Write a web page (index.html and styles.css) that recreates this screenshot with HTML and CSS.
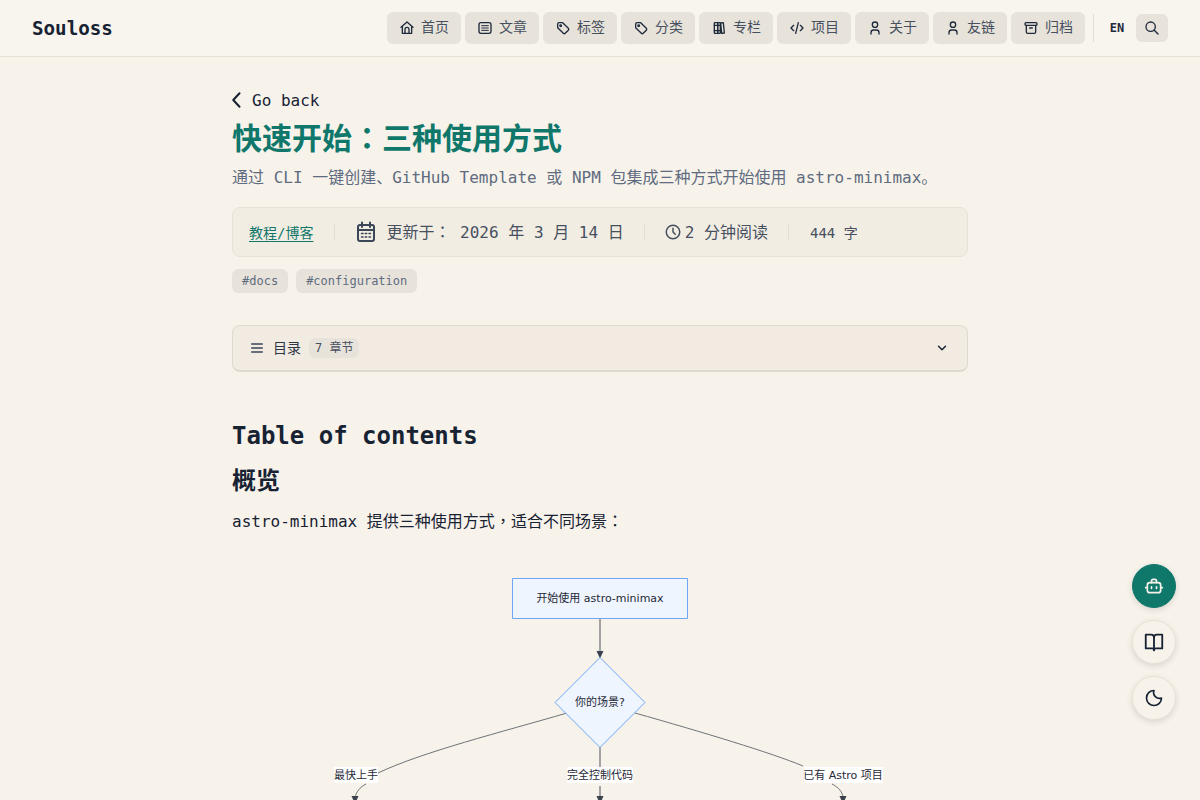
FILE: index.html
```html
<!DOCTYPE html>
<html lang="zh-CN">
<head>
    <meta charset="UTF-8">
    <meta name="viewport" content="width=device-width, initial-scale=1.0">
    <title>快速开始&#xFF1A;三种使用方式 | Souloss</title>
    <link rel="stylesheet" href="styles.css">
</head>
<body>

    <!-- Header -->
    <header class="site-header">
        <a class="logo" href="#">Souloss</a>
        <nav class="nav">
            <a class="nav-item" href="#">
                <svg class="nav-icon" viewBox="0 0 24 24"><path d="M3 11l9-8 9 8"/><path d="M5 10v10h14V10"/><path d="M9 20v-6a3 3 0 0 1 6 0v6"/></svg>
                <span>首页</span>
            </a>
            <a class="nav-item" href="#">
                <svg class="nav-icon" viewBox="0 0 24 24"><rect x="3" y="4" width="18" height="16" rx="3"/><path class="fine" d="M7 8.500h10M7 12h10M7 15.500h10"/></svg>
                <span>文章</span>
            </a>
            <a class="nav-item" href="#">
                <svg class="nav-icon" viewBox="0 0 24 24"><path d="M4 6a2 2 0 0 1 2-2h5.500l8.500 8.500a2 2 0 0 1 0 2.800L15.300 20a2 2 0 0 1-2.800 0L4 11.500z"/><circle cx="8.500" cy="8.500" r="1.200"/></svg>
                <span>标签</span>
            </a>
            <a class="nav-item" href="#">
                <svg class="nav-icon" viewBox="0 0 24 24"><path d="M4 6a2 2 0 0 1 2-2h5.500l8.500 8.500a2 2 0 0 1 0 2.800L15.300 20a2 2 0 0 1-2.800 0L4 11.500z"/><circle cx="8.500" cy="8.500" r="1.200"/></svg>
                <span>分类</span>
            </a>
            <a class="nav-item" href="#">
                <svg class="nav-icon" viewBox="0 0 24 24"><rect x="5" y="4" width="5" height="16" rx="1"/><rect x="10" y="4" width="4" height="16" rx="1"/><path d="M14.500 4.500l4-.5 1.500 15.500-4 .5z"/><path d="M5 8h9M5 16h9"/></svg>
                <span>专栏</span>
            </a>
            <a class="nav-item" href="#">
                <svg class="nav-icon" viewBox="0 0 24 24"><path d="M7 8l-4 4 4 4M17 8l4 4-4 4M14 4l-4 16"/></svg>
                <span>项目</span>
            </a>
            <a class="nav-item" href="#">
                <svg class="nav-icon" viewBox="0 0 24 24"><circle cx="12" cy="7" r="4"/><path d="M6 21v-2a4 4 0 0 1 4-4h4a4 4 0 0 1 4 4v2"/></svg>
                <span>关于</span>
            </a>
            <a class="nav-item" href="#">
                <svg class="nav-icon" viewBox="0 0 24 24"><circle cx="12" cy="7" r="4"/><path d="M6 21v-2a4 4 0 0 1 4-4h4a4 4 0 0 1 4 4v2"/></svg>
                <span>友链</span>
            </a>
            <a class="nav-item" href="#">
                <svg class="nav-icon" viewBox="0 0 24 24"><rect x="3" y="4" width="18" height="4" rx="1.500"/><path d="M5 8v10a2 2 0 0 0 2 2h10a2 2 0 0 0 2-2V8"/><path d="M10 12h4"/></svg>
                <span>归档</span>
            </a>
        </nav>
        <div class="nav-divider"></div>
        <a class="lang" href="#">EN</a>
        <button class="search-btn" aria-label="Search">
            <svg class="nav-icon" viewBox="0 0 24 24"><circle cx="10" cy="10" r="7"/><path d="M21 21l-6-6"/></svg>
        </button>
    </header>

    <!-- Post -->
    <main class="post">
        <a class="back" href="#">
            <svg class="back-icon" viewBox="0 0 24 24"><path d="M15 4l-7.500 8 7.500 8"/></svg>
            <span>Go back</span>
        </a>
        <h1 class="post-title">快速开始<span class="punct" lang="zh-TW">&#xFF1A;</span>三种使用方式</h1>
        <p class="post-desc">通过 CLI 一键创建、GitHub Template 或 NPM 包集成三种方式开始使用 astro-minimax。</p>

        <div class="meta">
            <a class="meta-cat" href="#">教程/博客</a>
            <span class="meta-sep"></span>
            <span class="meta-date">
                <svg class="cal-icon" viewBox="0 0 24 24"><rect x="4" y="5" width="16" height="16" rx="2"/><path d="M4 10h16M8 2.500V7M16 2.500V7"/><path class="dots" d="M7.500 13.500h1.500M11.200 13.500h1.500M15 13.500h1.500M7.500 17h1.500M11.200 17h1.500M15 17h1.500"/></svg>
                <span class="meta-text">更新于<span class="punct" lang="zh-TW">&#xFF1A;</span> 2026 年 3 月 14 日</span>
            </span>
            <span class="meta-sep"></span>
            <span class="meta-read">
                <svg class="clock-icon" viewBox="0 0 24 24"><circle cx="12" cy="12" r="9"/><path d="M12 7v5l3 3"/></svg>
                <span class="meta-text">2 分钟阅读</span>
            </span>
            <span class="meta-sep"></span>
            <span class="meta-words">444 字</span>
        </div>

        <div class="tags">
            <a class="tag" href="#">#docs</a>
            <a class="tag" href="#">#configuration</a>
        </div>

        <div class="toc">
            <svg class="toc-icon" viewBox="0 0 24 24"><path d="M4 6h16M4 12h16M4 18h16"/></svg>
            <span class="toc-label">目录</span>
            <span class="toc-count">7 章节</span>
            <svg class="toc-chevron" viewBox="0 0 24 24"><path d="M6 9l6 6 6-6"/></svg>
        </div>

        <h2 class="h-toc">Table of contents</h2>
        <h2 class="h-section">概览</h2>
        <p class="para">astro-minimax 提供三种使用方式<span class="punct" lang="zh-TW">&#xFF0C;</span>适合不同场景<span class="punct" lang="zh-TW">&#xFF1A;</span></p>

        <!-- Flowchart -->
        <svg class="flow" viewBox="0 0 736 260" width="736" height="260">
            <path class="edge" d="M368 58V93"/>
            <path class="head" d="M364.500 91h7l-3.500 7.500z"/>
            <path class="edge thin" d="M335 153C270 172 190 192 146 213"/>
            <path class="edge thin" d="M403 153C470 172 540 193 571 206"/>
            <path class="edge" d="M368 187V210"/>
            <path class="edge" d="M368 226V240"/>
            <path class="head" d="M364.500 236h7l-3.500 8z"/>
            <path class="edge thin" d="M134 224C128 227 124 232 123 238"/>
            <path class="head" d="M119.500 236h7l-3.500 8z"/>
            <path class="edge thin" d="M600 224C606 227 611 232 611 238"/>
            <path class="head" d="M607.500 236h7l-3.500 8z"/>

            <rect class="node" x="280.500" y="18.500" width="175" height="40"/>
            <text class="flow-text" x="368" y="42">开始使用 astro-minimax</text>

            <path class="node" d="M368 97.500L413 142.500L368 187.500L323 142.500Z"/>
            <text class="flow-text" x="368" y="146">你的场景?</text>

            <rect class="label-bg" x="102" y="207" width="44" height="16"/>
            <text class="flow-text" x="124" y="219">最快上手</text>
            <rect class="label-bg" x="335" y="207" width="66" height="16"/>
            <text class="flow-text" x="368" y="219">完全控制代码</text>
            <rect class="label-bg" x="572" y="207" width="79" height="16"/>
            <text class="flow-text" x="611" y="219">已有 Astro 项目</text>
        </svg>
    </main>

    <!-- Floating buttons -->
    <div class="fabs">
        <button class="fab fab-primary" aria-label="AI">
            <svg viewBox="0 0 24 24"><rect x="4" y="8" width="16" height="12" rx="3"/><path d="M9 8V6a2 2 0 0 1 2-2h2a2 2 0 0 1 2 2v2M2 14h2M20 14h2"/><path d="M9 13v2M15 13v2"/></svg>
        </button>
        <button class="fab fab-book" aria-label="Reading">
            <svg viewBox="0 0 24 24"><path d="M12 7a3 3 0 0 0-3-3H3v15h7a2 2 0 0 1 2 2 2 2 0 0 1 2-2h7V4h-6a3 3 0 0 0-3 3z"/><path d="M12 7v14"/></svg>
        </button>
        <button class="fab" aria-label="Theme">
            <svg viewBox="0 0 24 24"><path d="M12 3a7 7 0 0 0 9 9 9 9 0 1 1-9-9z"/></svg>
        </button>
    </div>

</body>
</html>
```

FILE: styles.css
```css
* {
    box-sizing: border-box;
}
html, body {
    height: 100%;
    overflow: hidden;
}
body {
    margin: 0;
    font-family: "DejaVu Sans Mono", "Noto Sans CJK SC", monospace;
    background-color: #f7f3eb;
    color: #172233;
}
a {
    color: inherit;
    text-decoration: none;
}
svg {
    fill: none;
    stroke: currentColor;
    stroke-width: 2;
    stroke-linecap: round;
    stroke-linejoin: round;
}
.punct {
    font-family: "Noto Sans CJK TC", sans-serif;
    line-height: 0;
}

/* Header */
.site-header {
    display: flex;
    align-items: center;
    height: 57px;
    padding: 0 32px;
    background-color: #f8f5ee;
    border-bottom: 1px solid #e5e0d6;
}
.logo {
    font-size: 19.200px;
    font-weight: 700;
    margin-right: auto;
}
.nav {
    display: flex;
    gap: 4px;
}
.nav-item {
    display: flex;
    align-items: center;
    justify-content: center;
    gap: 6px;
    width: 74px;
    height: 32px;
    background-color: #e8e3da;
    border-radius: 6px;
    font-size: 14px;
    color: #47505f;
}
.nav-item span {
    line-height: 16px;
    margin-bottom: 2px;
}
.nav-icon {
    width: 16px;
    height: 16px;
    color: #1f2a3c;
    flex-shrink: 0;
}
.fine {
    stroke-width: 1.500;
}
.nav-divider {
    width: 1px;
    height: 28px;
    margin: 0 8px;
    background-color: #e3ded4;
}
.lang {
    width: 30px;
    text-align: center;
    font-size: 12px;
    font-weight: 700;
    color: #1f2a3c;
    margin-right: 4px;
}
.search-btn {
    display: flex;
    align-items: center;
    justify-content: center;
    width: 32px;
    height: 28px;
    padding: 0;
    border: none;
    border-radius: 6px;
    background-color: #e8e3da;
}

/* Post */
.post {
    width: 736px;
    margin: 0 auto;
    padding-top: 31px;
}
.back {
    display: flex;
    align-items: center;
    height: 24px;
    font-size: 16px;
}
.back-icon {
    width: 20px;
    height: 20px;
    margin-left: -5px;
    stroke-width: 2.500;
}
.back span {
    margin-left: 5px;
}
.post-title {
    margin: 7px 0 0;
    font-size: 30px;
    line-height: 40px;
    font-weight: 700;
    color: #10776b;
}
.post-desc {
    margin: 7px 0 0;
    font-size: 16px;
    line-height: 24px;
    color: #5f6b80;
}

/* Meta bar */
.meta {
    display: flex;
    align-items: center;
    height: 50px;
    margin-top: 17px;
    padding: 0 16px;
    background-color: #f2ede3;
    border: 1px solid #e7e2d8;
    border-radius: 8px;
    font-size: 16px;
    color: #47505f;
}
.meta-cat {
    font-size: 14px;
    margin-right: 1px;
    color: #10776b;
    text-decoration: underline;
    text-underline-offset: 3px;
}
.meta-sep {
    width: 1px;
    height: 16px;
    margin: 0 20px;
    background-color: #e3ded4;
}
.meta-date, .meta-read {
    display: flex;
    align-items: center;
    gap: 8px;
    margin-left: -1px;
}
.meta-read {
    gap: 3px;
}
.meta-text {
    margin-bottom: 2px;
}
.cal-icon {
    width: 24px;
    height: 24px;
    color: #3b4657;
}
.dots {
    stroke-width: 1.500;
}
.clock-icon {
    width: 18px;
    height: 18px;
}
.meta-words {
    font-size: 14px;
    margin-left: 1px;
}

/* Tags */
.tags {
    display: flex;
    gap: 8px;
    margin-top: 12px;
}
.tag {
    height: 24px;
    padding: 0 10px;
    line-height: 24px;
    background-color: #e8e3da;
    border-radius: 6px;
    font-size: 12px;
    color: #5f6b80;
}

/* Table of contents toggle */
.toc {
    display: flex;
    align-items: center;
    height: 47px;
    margin-top: 32px;
    padding: 0 16px;
    background-color: #f2ebe1;
    border: 1px solid #dfdacf;
    border-bottom-width: 2px;
    border-radius: 8px;
    font-size: 14px;
}
.toc-icon {
    width: 16px;
    height: 16px;
    color: #3b4657;
}
.toc-label {
    margin-left: 8px;
    margin-bottom: 2px;
    color: #2c3646;
}
.toc-count {
    margin-left: 8px;
    padding: 0 6px;
    height: 20px;
    line-height: 20px;
    font-size: 12px;
    background-color: #e8e3da;
    border-radius: 6px;
    color: #47505f;
}
.toc-chevron {
    width: 14px;
    height: 14px;
    margin-left: auto;
    margin-right: 2px;
    stroke-width: 2.500;
}

/* Content */
.h-toc {
    margin: 46px 0 0;
    font-size: 24px;
    line-height: 36px;
    font-weight: 700;
}
.h-section {
    margin: 9px 0 0;
    font-size: 24px;
    line-height: 36px;
    font-weight: 700;
}
.para {
    margin: 9px 0 0;
    font-size: 16px;
    line-height: 28px;
}

/* Flowchart */
.flow {
    display: block;
    margin-top: 24px;
    overflow: visible;
    stroke-linecap: butt;
}
.node {
    fill: #eff5ff;
    stroke: #6ea5f5;
    stroke-width: 1;
}
.edge {
    stroke: #a3a3a3;
    stroke-width: 2;
}
.edge.thin {
    stroke: #6f7278;
    stroke-width: 1;
}
.head {
    fill: #3b414d;
    stroke: none;
}
.label-bg {
    fill: #ffffff;
    stroke: none;
}
.flow-text {
    font-family: "DejaVu Sans", "Noto Sans CJK SC", sans-serif;
    font-size: 11px;
    text-anchor: middle;
    fill: #1f2937;
    stroke: none;
}

/* Floating buttons */
.fabs {
    position: fixed;
    right: 24px;
    bottom: 80px;
    display: flex;
    flex-direction: column;
    gap: 12px;
}
.fab {
    display: flex;
    align-items: center;
    justify-content: center;
    width: 44px;
    height: 44px;
    padding: 0;
    border: 1px solid #e7e2d8;
    border-radius: 50%;
    background-color: #f7f3eb;
    color: #172233;
    box-shadow: 0 2px 6px rgba(0, 0, 0, 0.12);
}
.fab svg {
    width: 20px;
    height: 20px;
}
.fab-book svg {
    width: 22px;
    height: 22px;
}
.fab-primary {
    background-color: #10776b;
    border-color: #10776b;
    color: #f7f3eb;
}
```
